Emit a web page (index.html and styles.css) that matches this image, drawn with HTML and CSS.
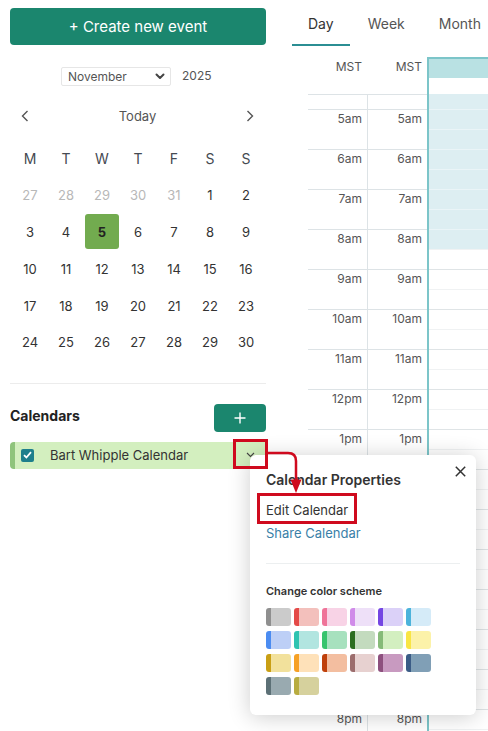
FILE: index.html
```html
<!DOCTYPE html>
<html lang="en">
<head>
<meta charset="utf-8">
<title>Calendar</title>
<link rel="stylesheet" href="styles.css">
</head>
<body>
<div class="app">
  <aside class="sidebar">
    <button class="create-btn">+ Create new event</button>
    <div class="month-row">
      <div class="month-select"><span>November</span>
        <svg class="sel-chev" width="10" height="7" viewBox="0 0 10 7"><path d="M1.5 1.5 L5 5 L8.5 1.5" fill="none" stroke="#444" stroke-width="2" stroke-linecap="round" stroke-linejoin="round"/></svg>
      </div>
      <span class="year">2025</span>
    </div>
    <div class="nav-row">
      <svg width="8" height="12" viewBox="0 0 8 12"><path d="M6.5 1 L1.5 6 L6.5 11" fill="none" stroke="#555" stroke-width="1.4"/></svg>
      <span class="today">Today</span>
      <svg width="8" height="12" viewBox="0 0 8 12"><path d="M1.5 1 L6.5 6 L1.5 11" fill="none" stroke="#555" stroke-width="1.4"/></svg>
    </div>
    <div class="mini-cal">
      <div class="wd">M</div><div class="wd">T</div><div class="wd">W</div><div class="wd">T</div><div class="wd">F</div><div class="wd">S</div><div class="wd">S</div>
      <div class="d muted">27</div><div class="d muted">28</div><div class="d muted">29</div><div class="d muted">30</div><div class="d muted">31</div><div class="d">1</div><div class="d">2</div>
      <div class="d">3</div><div class="d">4</div><div class="d"><span class="today-box">5</span></div><div class="d">6</div><div class="d">7</div><div class="d">8</div><div class="d">9</div>
      <div class="d">10</div><div class="d">11</div><div class="d">12</div><div class="d">13</div><div class="d">14</div><div class="d">15</div><div class="d">16</div>
      <div class="d">17</div><div class="d">18</div><div class="d">19</div><div class="d">20</div><div class="d">21</div><div class="d">22</div><div class="d">23</div>
      <div class="d">24</div><div class="d">25</div><div class="d">26</div><div class="d">27</div><div class="d">28</div><div class="d">29</div><div class="d">30</div>
    </div>
    <div class="divider"></div>
    <div class="cal-head">
      <span class="cal-title">Calendars</span>
      <button class="add-btn"><svg width="12" height="12" viewBox="0 0 12 12"><path d="M6 0.5 V11.5 M0.5 6 H11.5" stroke="#fff" stroke-width="1.4"/></svg></button>
    </div>
    <div class="cal-item">
      <span class="check"><svg width="9" height="8" viewBox="0 0 9 8"><path d="M1 4.2 L3.4 6.5 L8 1.2" fill="none" stroke="#fff" stroke-width="1.8"/></svg></span>
      <span class="cal-name">Bart Whipple Calendar</span>
      <svg class="item-chev" width="9" height="6" viewBox="0 0 9 6"><path d="M1 1 L4.5 4.5 L8 1" fill="none" stroke="#444" stroke-width="1.1"/></svg>
    </div>
  </aside>

  <main class="main">
    <nav class="tabs">
      <span class="tab active">Day</span>
      <span class="tab">Week</span>
      <span class="tab">Month</span>
    </nav>
    <div class="grid">
      <div class="tcol">
        <div class="thead">MST</div>
        <div class="tbody">
          <div class="trow partial"></div>
          <div class="trow">5am</div><div class="trow">6am</div><div class="trow">7am</div><div class="trow">8am</div>
          <div class="trow">9am</div><div class="trow">10am</div><div class="trow">11am</div><div class="trow">12pm</div>
          <div class="trow">1pm</div><div class="trow">2pm</div><div class="trow">3pm</div><div class="trow">4pm</div>
          <div class="trow">5pm</div><div class="trow">6pm</div><div class="trow">7pm</div><div class="trow">8pm</div>
        </div>
      </div>
      <div class="tcol second">
        <div class="thead">MST</div>
        <div class="tbody">
          <div class="trow partial"></div>
          <div class="trow">5am</div><div class="trow">6am</div><div class="trow">7am</div><div class="trow">8am</div>
          <div class="trow">9am</div><div class="trow">10am</div><div class="trow">11am</div><div class="trow">12pm</div>
          <div class="trow">1pm</div><div class="trow">2pm</div><div class="trow">3pm</div><div class="trow">4pm</div>
          <div class="trow">5pm</div><div class="trow">6pm</div><div class="trow">7pm</div><div class="trow">8pm</div>
        </div>
      </div>
      <div class="daycol">
        <div class="dhead"><div class="dband"></div></div>
        <div class="dbody">
          <div class="slot off first"></div>
          <div class="slot off"></div><div class="slot off"></div><div class="slot off"></div><div class="slot off"></div>
          <div class="slot off"></div><div class="slot off"></div><div class="slot off"></div>
          <div class="slot half"></div>
          <div class="slot hour"></div><div class="slot half"></div><div class="slot hour"></div><div class="slot half"></div>
          <div class="slot hour"></div><div class="slot half"></div><div class="slot hour"></div><div class="slot half"></div>
          <div class="slot hour"></div><div class="slot half"></div><div class="slot hour"></div><div class="slot half"></div>
          <div class="slot hour"></div><div class="slot half"></div><div class="slot hour"></div><div class="slot half"></div>
          <div class="slot hour"></div><div class="slot half"></div><div class="slot hour"></div><div class="slot half"></div>
          <div class="slot hour"></div><div class="slot half"></div><div class="slot hour"></div><div class="slot half"></div>
        </div>
      </div>
    </div>
  </main>
</div>

<div class="popup">
  <svg class="close" width="11" height="11" viewBox="0 0 11 11"><path d="M0.8 0.8 L10.2 10.2 M10.2 0.8 L0.8 10.2" stroke="#333" stroke-width="1.5"/></svg>
  <div class="pop-title">Calendar Properties</div>
  <div class="pop-link">Edit Calendar</div>
  <div class="pop-link share">Share Calendar</div>
  <div class="pop-divider"></div>
  <div class="pop-sub">Change color scheme</div>
  <div class="swatches">
    <span class="sw" style="--a:#8f8f8f;--b:#cbcbcb"></span>
    <span class="sw" style="--a:#e44a48;--b:#f3c0bc"></span>
    <span class="sw" style="--a:#ef7499;--b:#f8d3e6"></span>
    <span class="sw" style="--a:#d08be9;--b:#eee0f8"></span>
    <span class="sw" style="--a:#7446e3;--b:#dbd1f8"></span>
    <span class="sw" style="--a:#4cb3db;--b:#d5ebf8"></span>
    <span class="sw" style="--a:#4b8cf1;--b:#bdcff6"></span>
    <span class="sw" style="--a:#2ec3b0;--b:#b2e5e0"></span>
    <span class="sw" style="--a:#37c46d;--b:#a7e1be"></span>
    <span class="sw" style="--a:#2b6e1f;--b:#c3dbbe"></span>
    <span class="sw" style="--a:#86bb78;--b:#d3efc0"></span>
    <span class="sw" style="--a:#f9e544;--b:#fcf2a9"></span>
    <span class="sw" style="--a:#c99f15;--b:#f2e19c"></span>
    <span class="sw" style="--a:#f6a125;--b:#fee1b9"></span>
    <span class="sw" style="--a:#bf400b;--b:#f3bea0"></span>
    <span class="sw" style="--a:#9c6d6d;--b:#e7d1d0"></span>
    <span class="sw" style="--a:#8d507e;--b:#c89ac0"></span>
    <span class="sw" style="--a:#3b5c86;--b:#809fb6"></span>
    <span class="sw" style="--a:#5c7076;--b:#99aab0"></span>
    <span class="sw" style="--a:#b8ac40;--b:#d6d19d"></span>
  </div>
</div>

<svg class="annot" width="488" height="731" viewBox="0 0 488 731">
  <rect x="234.5" y="440.5" width="32" height="27" fill="none" stroke="#cf0a1e" stroke-width="3"/>
  <path d="M268 453 H288 Q296 453 296 461 V481" fill="none" stroke="#cf0a1e" stroke-width="2.5"/>
  <path d="M290.5 479.5 H301.5 L296 493 Z" fill="#cf0a1e"/>
  <rect x="258.5" y="494.5" width="97" height="28" fill="none" stroke="#cf0a1e" stroke-width="3"/>
</svg>
</body>
</html>
```
FILE: styles.css
```css
* { box-sizing: border-box; }
html, body { margin: 0; height: 731px; overflow: hidden; background: #fff; }
body { font-family: Inter, "Noto Sans", sans-serif; color: #333; position: relative; }

.app { display: flex; height: 731px; }

.sidebar { width: 256px; margin-left: 10px; padding-top: 8px; flex: none; }
.create-btn {
  display: block; width: 100%; height: 37px; border: 0; border-radius: 4px;
  background: #1b866e; color: #fff; font: 400 15px Inter, sans-serif; cursor: pointer;
}
.month-row { display: flex; align-items: center; margin-top: 22px; padding-left: 51px; gap: 11px; }
.month-select {
  width: 110px; height: 19px; border: 1px solid #e6e6e6; border-radius: 2px;
  display: flex; align-items: center; justify-content: space-between;
  padding: 0 5px 0 6px; font-size: 12px; color: #555;
}
.year { font-size: 12px; color: #555; margin-top: -3px; }

.nav-row {
  display: flex; align-items: center; justify-content: space-between;
  height: 20px; margin-top: 20px; padding: 0 12px 0 11px;
}
.today { font-size: 13px; color: #555; }

.mini-cal {
  display: grid; grid-template-columns: repeat(7, 36px); grid-auto-rows: 36.8px;
  margin-top: 14px; padding-left: 2px;
}
.wd, .d { display: flex; align-items: center; justify-content: center; }
.wd { font-size: 14px; color: #454a52; }
.d { font-size: 13px; color: #333; }
.d.muted { color: #b8b8b8; }
.today-box {
  width: 34px; height: 35px; border-radius: 3px; background: #72ab4f;
  display: flex; align-items: center; justify-content: center; font-weight: 700; color: #222;
}

.divider { margin-top: 22px; border-top: 1px solid #ececec; }

.cal-head { display: flex; align-items: center; justify-content: space-between; margin-top: 20px; height: 28px; }
.cal-title { font-size: 14px; font-weight: 700; color: #222; padding-bottom: 5px; }
.add-btn {
  width: 52px; height: 28px; border: 0; border-radius: 4px; background: #1b866e;
  display: flex; align-items: center; justify-content: center; padding: 0;
}

.cal-item {
  display: flex; align-items: center; margin-top: 10px; height: 27px; width: 255px;
  background: #d3efbf; border-left: 5px solid #8fc47c; border-radius: 4px 0 0 4px; padding-left: 6px;
}
.check {
  width: 13px; height: 13px; border-radius: 2px; background: #1e7f8c;
  display: flex; align-items: center; justify-content: center;
}
.cal-name { margin-left: 16px; font-size: 13px; color: #333; }
.item-chev { margin-left: auto; margin-right: 10px; }

.main { flex: 1; margin-left: 26px; min-width: 0; overflow: hidden; }
.tabs { display: flex; gap: 2px; }
.tab {
  padding: 15px 16px 12px; font-size: 14px; line-height: 17px; color: #555;
  border-bottom: 2px solid transparent;
}
.tab.active { color: #333; border-bottom-color: #2b8e93; }

.grid { display: flex; margin-top: 11px; margin-left: 16px; }
.tcol { width: 59px; flex: none; }
.tcol.second { width: 60px; }
.thead {
  height: 37px; padding: 3px 5px 0 0; text-align: right; font-size: 12px; line-height: 14px; color: #555;
}
.tbody { border-top: 1px solid #dde3e6; }
.tcol.second .tbody { border-left: 1px solid #dde3e6; }
.trow {
  height: 40px; border-top: 1px solid #dde3e6; padding: 2px 5px 0 0;
  text-align: right; font-size: 12px; line-height: 14px; color: #555;
}
.trow.partial { height: 14px; border-top: 0; }

.daycol { flex: 1; border-left: 2px solid #7cc5c9; min-width: 100px; }
.dhead { height: 37px; border-top: 2px solid #7cc5c9; }
.dband { height: 19px; background: #b9e1e3; }
.slot { height: 20px; border-top: 1px solid #dfe4e6; }
.slot.half { border-top-color: #f0f2f3; }
.slot.off { background: #ddeef2; border-top-color: #eaf4f7; }
.slot.first { height: 15px; border-top: 0; }

.popup {
  position: absolute; left: 250px; top: 455px; width: 226px; height: 260px;
  background: #fff; border-radius: 6px; padding: 16px;
  box-shadow: 0 2px 22px rgba(0, 0, 0, 0.2);
}
.close { position: absolute; right: 10px; top: 11px; }
.pop-title { font-size: 14px; line-height: 17px; font-weight: 600; color: #333; }
.pop-link { font-size: 13px; line-height: 23px; color: #333; }
.pop-title + .pop-link { margin-top: 11px; }
.pop-link.share { color: #3a7fa8; }
.pop-divider { margin-top: 18px; border-top: 1px solid #eceff0; }
.pop-sub { margin-top: 20px; font-size: 11px; line-height: 14px; font-weight: 600; color: #333; }
.swatches {
  display: grid; grid-template-columns: repeat(6, 25px); column-gap: 3px; row-gap: 5px; margin-top: 10px;
}
.sw {
  height: 18px; border-radius: 3px;
  background: linear-gradient(to right, var(--a) 0 5px, var(--b) 5px 100%);
}

.annot { position: absolute; left: 0; top: 0; pointer-events: none; }
```
